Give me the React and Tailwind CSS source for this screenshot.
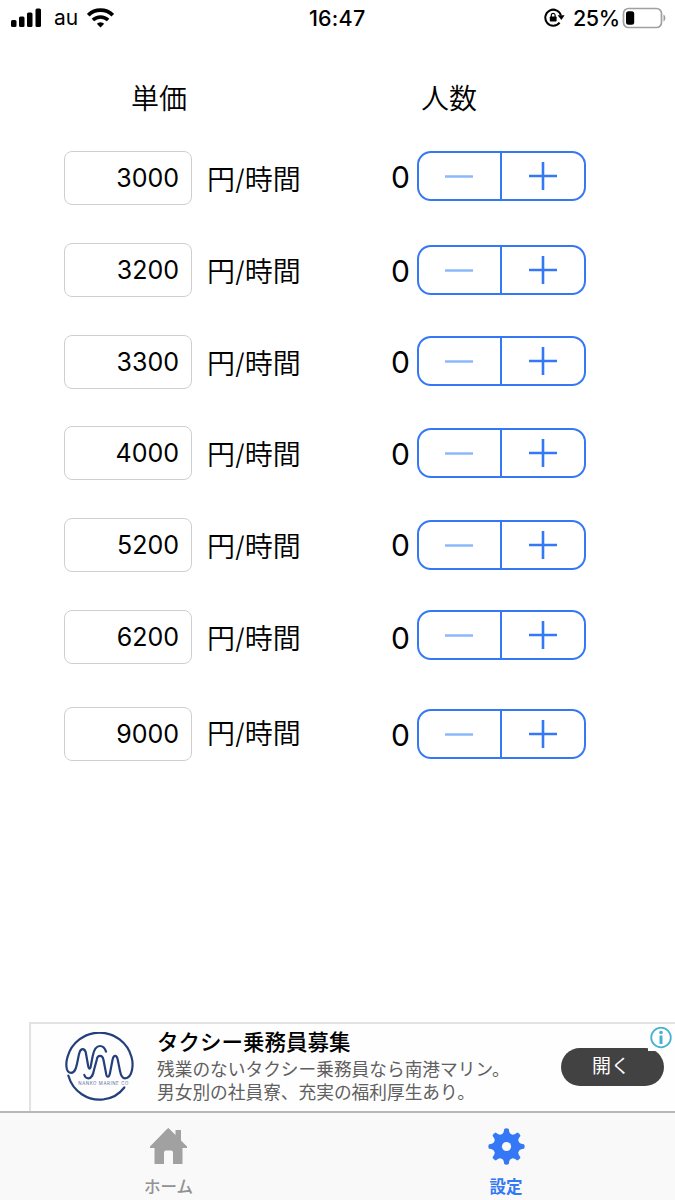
import { useState } from 'react';

const initialRows = [
    { price: 3000, height: "h-[92px]", unit: "mt-[8px]", count: "mt-[5px]", stepper: "mt-0" },
    { price: 3200, height: "h-[92px]", unit: "mt-[8px]", count: "mt-[7px]", stepper: "mt-[2px]" },
    { price: 3300, height: "h-[91px]", unit: "mt-[8px]", count: "mt-[6px]", stepper: "mt-px" },
    { price: 4000, height: "h-[92px]", unit: "mt-[8px]", count: "mt-[7px]", stepper: "mt-[2px]" },
    { price: 5200, height: "h-[92px]", unit: "mt-[8px]", count: "mt-[6px]", stepper: "mt-[2px]" },
    { price: 6200, height: "h-[97px]", unit: "mt-[8px]", count: "mt-[7px]", stepper: "mt-0" },
    { price: 9000, height: "h-[54px]", unit: "mt-[6px]", count: "mt-[7px]", stepper: "mt-[2px]" },
];

const StatusBar = () => (
    <div className="flex h-9 shrink-0 items-center text-[22px] leading-9 text-black">
        <svg className="ml-[11px] h-[20px] w-[31px]" viewBox="0 0 31 20">
            <rect x="0" y="12" width="5.5" height="7" rx="1.5" />
            <rect x="8" y="8.5" width="5.5" height="10.5" rx="1.5" />
            <rect x="16" y="4.5" width="5.5" height="14.5" rx="1.5" />
            <rect x="24.5" y="0.5" width="5.5" height="18.5" rx="1.5" />
        </svg>
        <span className="ml-[12px] w-[33px] text-[21px]">au</span>
        <svg className="h-[20px] w-[27px]" viewBox="0 0 27 20" fill="none" stroke="#000">
            <path d="M1.2 7.2a17.6 17.6 0 0 1 24.6 0" strokeWidth="3.8" />
            <path d="M5.9 12a11 11 0 0 1 15.2 0" strokeWidth="3.6" />
            <path d="M13.5 19.6l-3.7-3.8a5.3 5.3 0 0 1 7.4 0z" fill="#000" stroke="none" />
        </svg>
        <span className="ml-[195px] w-[59px] text-[21.5px] font-medium tracking-[0.2px]">16:47</span>
        <svg className="ml-[176px] h-[20px] w-[21px]" viewBox="0 0 21 20" fill="none" stroke="#000" strokeWidth="2">
            <path d="M15.6 14.6A8 8 0 1 1 17 7.5" />
            <path d="M13.6 7.3h7l-3.2 4.6z" fill="#000" stroke="none" />
            <rect x="5.8" y="8.4" width="6.8" height="5.2" rx="0.8" fill="#000" stroke="none" />
            <path d="M7.3 9V7.2a1.9 1.9 0 0 1 3.8 0V9" strokeWidth="1.2" />
        </svg>
        <span className="ml-[8px] w-[49px] whitespace-nowrap text-[21.5px] font-medium tracking-[-0.4px]">25%</span>
        <svg className="h-[22px] w-[44px]" viewBox="0 0 44 22">
            <rect x="1.5" y="1.5" width="38" height="19" rx="5" fill="none" stroke="#a0a0a0" strokeWidth="1.7" />
            <rect x="4" y="4.2" width="8.2" height="13.6" rx="2.5" />
            <path d="M41.5 7.5c2.4 1.2 2.4 5.8 0 7z" fill="#999" />
        </svg>
    </div>
);

const Stepper = ({ value, onChange }) => (
    <div className="flex h-[50px] w-[169px] shrink-0 overflow-hidden rounded-[14px] border-2 border-[#3478f6]">
        <button
            aria-label="minus"
            className="flex w-[81px] items-center pl-[26px]"
            disabled={value === 0}
            onClick={() => onChange(value - 1)}
        >
            <svg className="h-7 w-7" viewBox="0 0 28 28">
                <path d="M0 14.5h28" stroke={value === 0 ? "#8bb8fb" : "#3478f6"} strokeWidth="2.6" />
            </svg>
        </button>
        <button
            aria-label="plus"
            className="flex flex-1 items-center border-l-2 border-[#3478f6] pl-[27px]"
            onClick={() => onChange(value + 1)}
        >
            <svg className="h-7 w-7" viewBox="0 0 28 28">
                <path d="M0 14h28M14 0v28" stroke="#3478f6" strokeWidth="2.6" />
            </svg>
        </button>
    </div>
);

const PriceRow = ({ row }) => {
    const [price, setPrice] = useState(row.price);
    const [count, setCount] = useState(0);

    return (
        <div className={`flex items-start ${row.height}`}>
            <input
                type="text"
                value={price}
                className="h-[54px] w-[128px] rounded-[8px] border border-[#cfcfcf] pb-px pr-[12px] text-right text-[25px] focus:outline-none"
                onChange={(e) => setPrice(e.target.value)}
            />
            <span className={`ml-[15px] w-[184px] text-[28px] font-[350] leading-[42px] ${row.unit}`}>円/時間</span>
            <span className={`w-[26px] text-[30px] leading-[42px] ${row.count}`}>{count}</span>
            <div className={row.stepper}>
                <Stepper value={count} onChange={setCount} />
            </div>
        </div>
    );
};

const AdBanner = () => (
    <div className="relative ml-[29px] flex h-[89px] shrink-0 border-l-2 border-t-2 border-[#e2e2e2] bg-[#fefefe]">
        <svg className="ml-[34px] mt-[8px] h-[70px] w-[70px]" viewBox="0 0 70 70" fill="none" stroke="#233f7c" strokeWidth="2.2" strokeLinecap="round">
            <path d="M19.3 43C20 45 21.5 46.3 23.3 46.3C27 46.3 28 43 29 38L31.7 28C32.5 22.5 37.5 22.5 38.5 28L41 41C41.5 46 44 46 45 41L47.5 28C48.5 22.5 51.8 22.5 52.8 28L55 39C56 44 57.5 46.3 60 46.3C64 46.3 66 43 67 38C68 33 67.7 29 66.5 25A33.2 33.2 0 0 0 2.5 25C1 30 1 34 2 37.5C3.5 42 8.5 42 10.5 37C12.5 32 13 25 14.5 20.5C16 16 19.5 16 20.8 20.5L23 33C23.5 37.5 25.5 38 26 33L27.7 24C29 17.5 31 14 35 14C38.5 14 40 16.5 41 19.7" />
            <path d="M3.3 43.5C8 60 23 69 38 67.5C47 66.5 54.5 62 59.3 55.5" />
            <text x="13.3" y="53" fill="#5d71a0" stroke="none" fontSize="4.4" textLength="50">NANKO MARINE CO</text>
        </svg>
        <div className="ml-[22px] w-[404px] whitespace-nowrap">
            <p className="mt-[4px] text-[21.5px] font-medium leading-[28px] text-black">タクシー乗務員募集</p>
            <p className="mt-[2px] text-[17.7px] leading-[23px] text-[#606060]">残業のないタクシー乗務員なら南港マリン。</p>
            <p className="text-[17.7px] leading-[24px] text-[#606060]">男女別の社員寮、充実の福利厚生あり。</p>
        </div>
        <button className="mt-[24px] h-[38px] w-[103px] shrink-0 rounded-full bg-[#424242] pr-[3px] text-[19px] leading-[36px] text-white">開く</button>
        <div className="absolute right-0 top-0 flex h-[27px] w-[27px] items-center bg-[#fefefe] pl-[2px]">
            <svg className="h-[22px] w-[22px]" viewBox="0 0 22 22">
                <circle cx="11" cy="10.500" r="9.8" fill="none" stroke="#45b2d1" strokeWidth="1.8" />
                <circle cx="11" cy="5.500" r="1.8" fill="#45b2d1" />
                <path d="M11 8.500v8.500" stroke="#45b2d1" strokeWidth="3" />
            </svg>
        </div>
    </div>
);

const TabBar = () => (
    <div className="flex h-[89px] shrink-0 border-t-2 border-[#b8b8b8] bg-[#f9f9f9] text-[16.5px] font-bold leading-[24px]">
        <button className="flex w-[337px] flex-col items-center text-[#929292]">
            <svg className="mt-[15px] h-[37px] w-[37px]" viewBox="0 0 37 37" fill="#a1a1a1">
                <path d="M18.5 0L25.5 7V2h5.5v10.5l6 6V20h-4.5v16H23V24.5q0-2-2-2h-5q-2 0-2 2V36H4.5V20H0v-1.500L17 1z" />
            </svg>
            <span className="mt-[10px] font-medium">ホーム</span>
        </button>
        <button className="flex w-[338px] flex-col items-center text-[#3478f6]">
            <svg className="mt-[15px] h-[37px] w-[37px]" viewBox="-18.5 -18.5 37 37">
                <g fill="#3478f6">
                    <circle r="13" />
                    {[0, 45, 90, 135, 180, 225, 270, 315].map((angle) => (
                        <path key={angle} d="M-5.5 -11.5Q-2.5 -13 -2.3 -17.5Q0 -18.8 2.3 -17.5Q2.5 -13 5.5 -11.5z" transform={`rotate(${angle})`} />
                    ))}
                </g>
                <circle r="4.6" fill="#f9f9f9" />
            </svg>
            <span className="mt-[10px]">設定</span>
        </button>
    </div>
);

const App = () => {
    return (
        <div className="flex h-[1200px] w-[675px] flex-col overflow-hidden bg-white font-['Inter','Noto_Sans_CJK_JP',sans-serif] text-black">
            <StatusBar />
            <div className="flex h-[115px] shrink-0 pt-[43px] text-[28px] font-[350] leading-[40px]">
                <span className="ml-[131px] w-[290px]">単価</span>
                <span>人数</span>
            </div>
            <div className="flex-1 pl-[64px]">
                {initialRows.map((row) => (
                    <PriceRow key={row.price} row={row} />
                ))}
            </div>
            <AdBanner />
            <TabBar />
        </div>
    );
};

export default App;
